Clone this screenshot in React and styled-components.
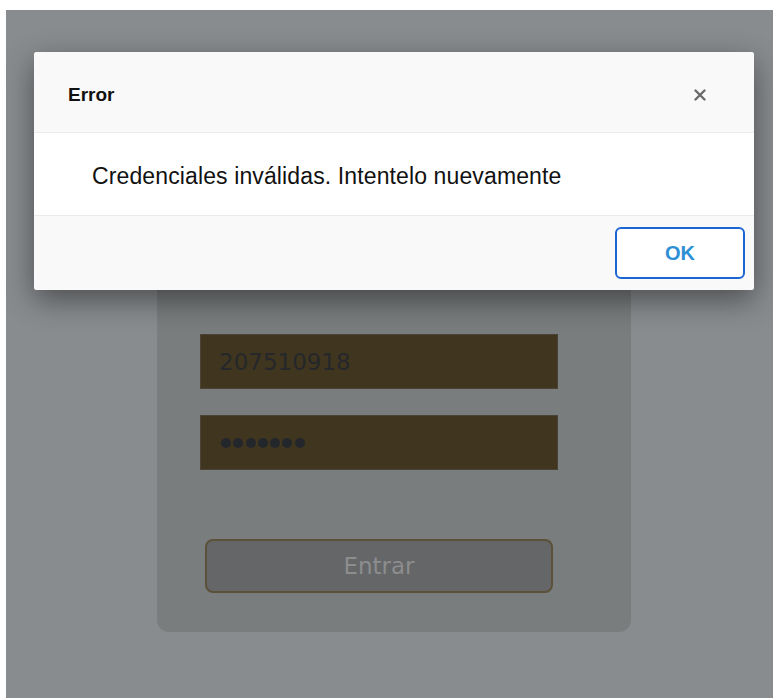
import React from "react";
import styled, { createGlobalStyle } from "styled-components";

const GlobalStyle = createGlobalStyle`
  html, body {
    margin: 0;
    padding: 0;
    background: #ffffff;
  }
  body {
    padding: 10px 1px 0 6px;
    font-family: "Liberation Sans", Arial, sans-serif;
  }
`;

const Screen = styled.div`
  position: relative;
  height: 688px;
  background: #898c8f;
  overflow: hidden;
`;

const LoginCard = styled.div`
  width: 474px;
  margin: 0 0 0 151px;
  padding: 84px 0 39px;
  position: relative;
  top: 240px;
  box-sizing: border-box;
  background: #7a7d7e;
  border-radius: 12px;
  display: flex;
  flex-direction: column;
  align-items: flex-start;
`;

const Field = styled.div`
  width: 358px;
  height: 55px;
  margin: 0 0 ${(p) => p.gap}px 43px;
  box-sizing: border-box;
  background: #40361f;
  border: 1px solid #4a4333;
  display: flex;
  align-items: center;
  padding-left: 18px;
  font-family: "DejaVu Sans", Verdana, sans-serif;
  font-size: 23px;
  color: #25272a;
`;

const Dots = styled.span`
  display: flex;
  gap: 2.3px;
  margin-left: 2px;

  i {
    width: 10px;
    height: 10px;
    border-radius: 50%;
    background: #23262b;
  }
`;

const EnterButton = styled.div`
  width: 348px;
  height: 54px;
  margin-left: 48px;
  box-sizing: border-box;
  background: #656668;
  border: 2px solid #5b5138;
  border-radius: 8px;
  display: flex;
  align-items: center;
  justify-content: center;
  font-family: "DejaVu Sans", Verdana, sans-serif;
  font-size: 23px;
  color: #8c8d8e;
`;

const Modal = styled.div`
  position: absolute;
  top: 42px;
  left: 28px;
  width: 720px;
  background: #ffffff;
  border-radius: 3px;
  box-shadow: 0 10px 30px rgba(0, 0, 0, 0.45);
  overflow: hidden;
`;

const ModalHeader = styled.div`
  height: 81px;
  background: #f9f9f9;
  border-bottom: 1px solid #ebebeb;
  box-sizing: border-box;
  display: flex;
  align-items: center;
  justify-content: space-between;
  padding: 5px 47px 0 34px;
`;

const Title = styled.h3`
  margin: 0;
  font-size: 19px;
  font-weight: 700;
  color: #111111;
`;

const CloseButton = styled.button`
  border: none;
  background: transparent;
  padding: 0;
  width: 14px;
  height: 14px;
  display: flex;
  align-items: center;
  justify-content: center;
  cursor: pointer;
`;

const ModalBody = styled.div`
  height: 82px;
  box-sizing: border-box;
  display: flex;
  align-items: center;
  padding: 4px 0 0 58px;
  font-size: 23px;
  letter-spacing: 0.12px;
  color: #111111;
`;

const ModalFooter = styled.div`
  height: 75px;
  box-sizing: border-box;
  background: #f9f9f9;
  border-top: 1px solid #ebebeb;
  display: flex;
  align-items: center;
  justify-content: flex-end;
  padding-right: 9px;
`;

const OkButton = styled.button`
  width: 130px;
  height: 52px;
  background: #ffffff;
  border: 2px solid #1b67d2;
  border-radius: 6px;
  font-family: "Liberation Sans", Arial, sans-serif;
  font-size: 20px;
  font-weight: 700;
  color: #2e8fd6;
  cursor: pointer;
`;

export default function App() {
  return (
    <>
      <GlobalStyle />
      <Screen>
        <LoginCard>
          <Field gap={26}>207510918</Field>
          <Field gap={69}>
            <Dots>
              {Array.from({ length: 7 }).map((_, i) => (
                <i key={i} />
              ))}
            </Dots>
          </Field>
          <EnterButton>Entrar</EnterButton>
        </LoginCard>

        <Modal>
          <ModalHeader>
            <Title>Error</Title>
            <CloseButton aria-label="Cerrar">
              <svg width="12" height="12" viewBox="0 0 12 12">
                <path
                  d="M1.5 1.5 L10.5 10.5 M10.5 1.5 L1.5 10.5"
                  stroke="#6a6a6a"
                  strokeWidth="2.4"
                  strokeLinecap="round"
                />
              </svg>
            </CloseButton>
          </ModalHeader>
          <ModalBody>Credenciales inválidas. Intentelo nuevamente</ModalBody>
          <ModalFooter>
            <OkButton>OK</OkButton>
          </ModalFooter>
        </Modal>
      </Screen>
    </>
  );
}
